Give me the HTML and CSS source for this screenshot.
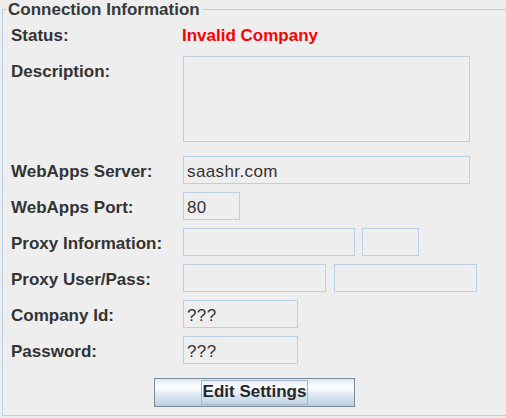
FILE: index.html
```html
<!DOCTYPE html>
<html lang="en">
<head>
<meta charset="utf-8">
<title>Connection Information</title>
<link rel="stylesheet" href="styles.css">
</head>
<body>
<fieldset class="conn">
  <legend class="conn-title">Connection Information</legend>
  <div class="form">
    <div class="row">
      <span class="label">Status:</span>
      <span class="status">Invalid Company</span>
    </div>
    <div class="row row-desc">
      <span class="label">Description:</span>
      <div class="field desc"></div>
    </div>
    <div class="row row-after-desc">
      <span class="label">WebApps Server:</span>
      <div class="field w-287">saashr.com</div>
    </div>
    <div class="row">
      <span class="label">WebApps Port:</span>
      <div class="field w-57">80</div>
    </div>
    <div class="row">
      <span class="label">Proxy Information:</span>
      <div class="pair pair-info">
        <div class="field w-172"></div>
        <div class="field w-57"></div>
      </div>
    </div>
    <div class="row">
      <span class="label">Proxy User/Pass:</span>
      <div class="pair pair-user">
        <div class="field w-143"></div>
        <div class="field w-143"></div>
      </div>
    </div>
    <div class="row">
      <span class="label">Company Id:</span>
      <div class="field w-115">???</div>
    </div>
    <div class="row">
      <span class="label">Password:</span>
      <div class="field w-115">???</div>
    </div>
    <div class="actions">
      <button class="btn" type="button"><span class="btn-focus">Edit Settings</span></button>
    </div>
  </div>
</fieldset>
</body>
</html>
```

FILE: styles.css
```css
html, body {
  margin: 0;
  padding: 0;
  background: #eeeeee;
  overflow: hidden;
}

body {
  width: 506px;
  height: 418px;
  font-family: "Liberation Sans", Arial, sans-serif;
  color: #333333;
}

.conn {
  box-sizing: border-box;
  width: 505px;
  margin: 0 0 0 2px;
  padding: 0 0 8px 3px;
  border: 1px solid #b8cfe5;
  min-inline-size: 0;
}

.conn-title {
  padding: 0 2px;
  font-size: 17px;
  font-weight: bold;
  line-height: 19px;
  color: #383838;
}

.form {
  padding: 1px 8px 0 5px;
  display: flex;
  flex-direction: column;
  gap: 8px;
}

.row {
  display: flex;
  align-items: flex-start;
  min-height: 28px;
}

.row-after-desc {
  margin-top: 6px;
}

.label {
  flex: 0 0 172px;
  box-sizing: border-box;
  padding-top: 6px;
  font-size: 17px;
  font-weight: bold;
  line-height: 19px;
  color: #333333;
}

.status {
  margin-left: -1px;
  padding-top: 6px;
  font-size: 17px;
  font-weight: bold;
  line-height: 19px;
  color: #ff0000;
}

.field {
  box-sizing: border-box;
  height: 28px;
  padding: 5px 3px 0;
  border: 1px solid #b8cfe5;
  background: #eeeeee;
  font-size: 17px;
  line-height: 19px;
  letter-spacing: 0.4px;
  color: #333333;
  white-space: nowrap;
  overflow: hidden;
}

.desc {
  width: 287px;
  height: 86px;
}

.w-287 { width: 287px; }
.w-172 { width: 172px; }
.w-143 { width: 143px; }
.w-115 { width: 115px; }
.w-57  { width: 57px; }

.pair {
  display: flex;
}

.pair-info { gap: 7px; }
.pair-user { gap: 8px; }

.actions {
  display: flex;
  justify-content: center;
  margin-top: 6px;
}

.btn {
  box-sizing: border-box;
  width: 201px;
  height: 29px;
  margin: 0;
  padding: 1px;
  border: 1px solid #7a8a99;
  border-radius: 0;
  background: linear-gradient(to bottom,
    #dde8f3 0%, #ffffff 30%, #dde8f3 60%, #b8cfe5 100%);
  font-family: "Liberation Sans", Arial, sans-serif;
  font-size: 17px;
  font-weight: bold;
  color: #262626;
  display: flex;
  justify-content: center;
  align-items: flex-start;
}

.btn-focus {
  display: block;
  box-sizing: border-box;
  height: 25px;
  padding: 0 1px 2px;
  border: 1px solid #a3b8cc;
  line-height: 21px;
}
```
